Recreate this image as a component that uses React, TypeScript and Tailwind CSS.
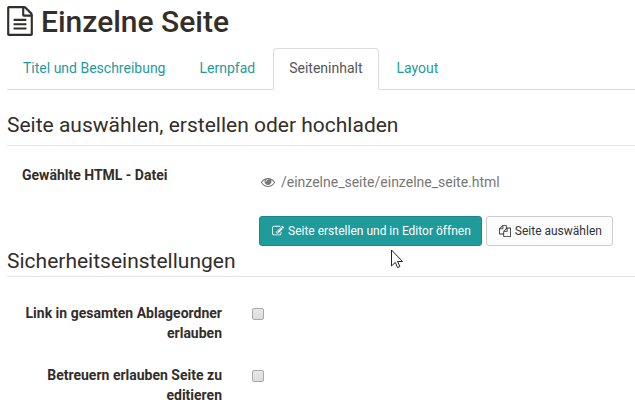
import type { ReactNode } from "react";

const paths = {
  file: "M1596 380q28 28 48 76t20 88v1152q0 40-28 68t-68 28h-1344q-40 0-68-28t-28-68v-1600q0-40 28-68t68-28h896q40 0 88 20t76 48zm-444-244v376h376q-10-29-22-41l-313-313q-12-12-41-22zm384 1528v-1024h-416q-40 0-68-28t-28-68v-416h-768v1536h1280zm-1024-864q0-14 9-23t23-9h704q14 0 23 9t9 23v64q0 14-9 23t-23 9h-704q-14 0-23-9t-9-23v-64zm736 224q14 0 23 9t9 23v64q0 14-9 23t-23 9h-704q-14 0-23-9t-9-23v-64q0-14 9-23t23-9h704zm0 256q14 0 23 9t9 23v64q0 14-9 23t-23 9h-704q-14 0-23-9t-9-23v-64q0-14 9-23t23-9h704z",
  eye: "M1664 960q-152-236-381-353 61 104 61 225 0 185-131.5 316.5t-316.5 131.5-316.5-131.5-131.5-316.5q0-121 61-225-229 117-381 353 133 205 333.5 326.5t434.5 121.5 434.5-121.5 333.5-326.5zm-720-384q0-20-14-34t-34-14q-125 0-214.5 89.5t-89.5 214.5q0 20 14 34t34 14 34-14 14-34q0-86 61-147t147-61q20 0 34-14t14-34zm848 384q0 34-20 69-140 230-376.5 368.5t-499.5 138.5-499.5-139-376.5-368q-20-35-20-69t20-69q140-229 376.5-368t499.5-139 499.5 139 376.5 368q20 35 20 69z",
  edit: "M888 1184l116-116-152-152-116 116v56h96v96h56zm440-720q-16-16-33 1l-350 350q-17 17-1 33t33-1l350-350q17-17 1-33zm80 594v190q0 119-84.5 203.5t-203.5 84.5h-832q-119 0-203.5-84.5t-84.5-203.5v-832q0-119 84.5-203.5t203.5-84.5h832q63 0 117 25 15 7 18 23 3 17-9 29l-49 49q-14 14-32 8-23-6-45-6h-832q-66 0-113 47t-47 113v832q0 66 47 113t113 47h832q66 0 113-47t47-113v-126q0-13 9-22l64-64q15-15 35-7t20 29zm-96-738l288 288-672 672h-288v-288zm444 132l-92 92-288-288 92-92q28-28 68-28t68 28l152 152q28 28 28 68t-28 68z",
  copy: "M1696 384q40 0 68 28t28 68v1216q0 40-28 68t-68 28h-960q-40 0-68-28t-28-68v-288h-544q-40 0-68-28t-28-68v-672q0-40 20-88t48-76l408-408q28-28 76-48t88-20h416q40 0 68 28t28 68v328q68-40 128-40h416zm-544 213l-299 299h299v-299zm-640-384l-299 299h299v-299zm196 647l316-316v-416h-384v416q0 40-28 68t-68 28h-416v640h512v-256q0-40 20-88t48-76zm956 804v-1152h-384v416q0 40-28 68t-68 28h-416v640h896z",
};

function Icon({ d, className, viewBox = "0 0 1792 1792" }: { d: string; className: string; viewBox?: string }) {
  return (
    <svg aria-hidden="true" viewBox={viewBox} fill="currentColor" className={className}>
      <path d={d} />
    </svg>
  );
}

const tabs = ["Titel und Beschreibung", "Lernpfad", "Seiteninhalt", "Layout"];

function Tabs({ active }: { active: string }) {
  return (
    <nav className="mt-2 flex gap-0.5 border-b border-[#ddd]">
      {tabs.map((tab) => (
        <a
          key={tab}
          href="#"
          aria-current={tab === active ? "page" : undefined}
          className={
            tab === active
              ? "-mb-px rounded-t border border-[#ddd] border-b-white bg-white px-[15px] pt-[9px] pb-[11px] text-[#555]"
              : "-mb-px border border-transparent px-[15px] pt-[9px] pb-[11px] text-[#1f9b9c]"
          }
        >
          {tab}
        </a>
      ))}
    </nav>
  );
}

function SectionTitle({ children, compact = false }: { children: ReactNode; compact?: boolean }) {
  return (
    <h2 className={`border-b border-[#e5e5e5] text-[21px] leading-6 font-normal ${compact ? "pb-[3px]" : "pb-2"}`}>
      {children}
    </h2>
  );
}

function CheckRow({ id, label }: { id: string; label: string }) {
  return (
    <div className="grid grid-cols-[215px_1fr] gap-[30px]">
      <label htmlFor={id} className="text-right font-bold">
        {label}
      </label>
      <input
        id={id}
        type="checkbox"
        className="mt-[5px] size-3 appearance-none rounded-xs border border-[#aaa] bg-linear-to-b from-[#e8e8e8] to-[#dcdcdc] checked:bg-[#1f9b9c]"
      />
    </div>
  );
}

export default function App() {
  return (
    <main className="relative bg-white pt-1 pb-2 pl-[7px] font-[Roboto,sans-serif] text-sm leading-5 text-[#332e29]">
      <h1 className="flex items-center gap-2 text-[30px] leading-9 font-medium">
        <Icon d={paths.file} viewBox="128 0 1536 1792" className="mb-0.5 h-[30px] w-[26px]" />
        Einzelne Seite
      </h1>
      <Tabs active="Seiteninhalt" />

      <section className="mt-[23px]">
        <SectionTitle>Seite auswählen, erstellen oder hochladen</SectionTitle>
        <div className="mt-[19px] grid grid-cols-[215px_1fr] gap-[30px]">
          <div className="pl-[15px] font-bold">Gewählte HTML - Datei</div>
          <div className="pt-[7px] pl-[7px]">
            <p className="flex items-center gap-1.5 pl-0.5 text-[#777]">
              <Icon d={paths.eye} className="size-3.5" />
              /einzelne_seite/einzelne_seite.html
            </p>
            <div className="mt-6 flex gap-1 text-xs leading-[18px]">
              <button
                type="button"
                className="flex items-center gap-1 rounded-[3px] border border-[#1b8788] bg-[#1f9b9c] pr-2.5 pl-3 py-[5px] text-white"
              >
                <Icon d={paths.edit} className="size-3" />
                Seite erstellen und in Editor öffnen
              </button>
              <button
                type="button"
                className="flex items-center gap-1 rounded-[3px] border border-[#ccc] bg-[#fcfcfc] pr-2.5 pl-3 py-[5px] text-[#333]"
              >
                <Icon d={paths.copy} className="size-3" />
                Seite auswählen
              </button>
            </div>
          </div>
        </div>
      </section>

      <section className="mt-[3px]">
        <SectionTitle compact>Sicherheitseinstellungen</SectionTitle>
        <div className="mt-[26px] flex flex-col gap-[22px]">
          <CheckRow id="folder-link" label="Link in gesamten Ablageordner erlauben" />
          <CheckRow id="coach-edit" label="Betreuern erlauben Seite zu editieren" />
        </div>
      </section>

      <svg aria-hidden="true" viewBox="0 0 12 20" className="absolute top-[249px] left-[391px] h-5 w-3">
        <path d="M.5 1v16l3.8-3.6 2.3 5.2 2.3-1-2.3-5.1h5z" fill="white" stroke="#222" strokeWidth="1" />
      </svg>
    </main>
  );
}
